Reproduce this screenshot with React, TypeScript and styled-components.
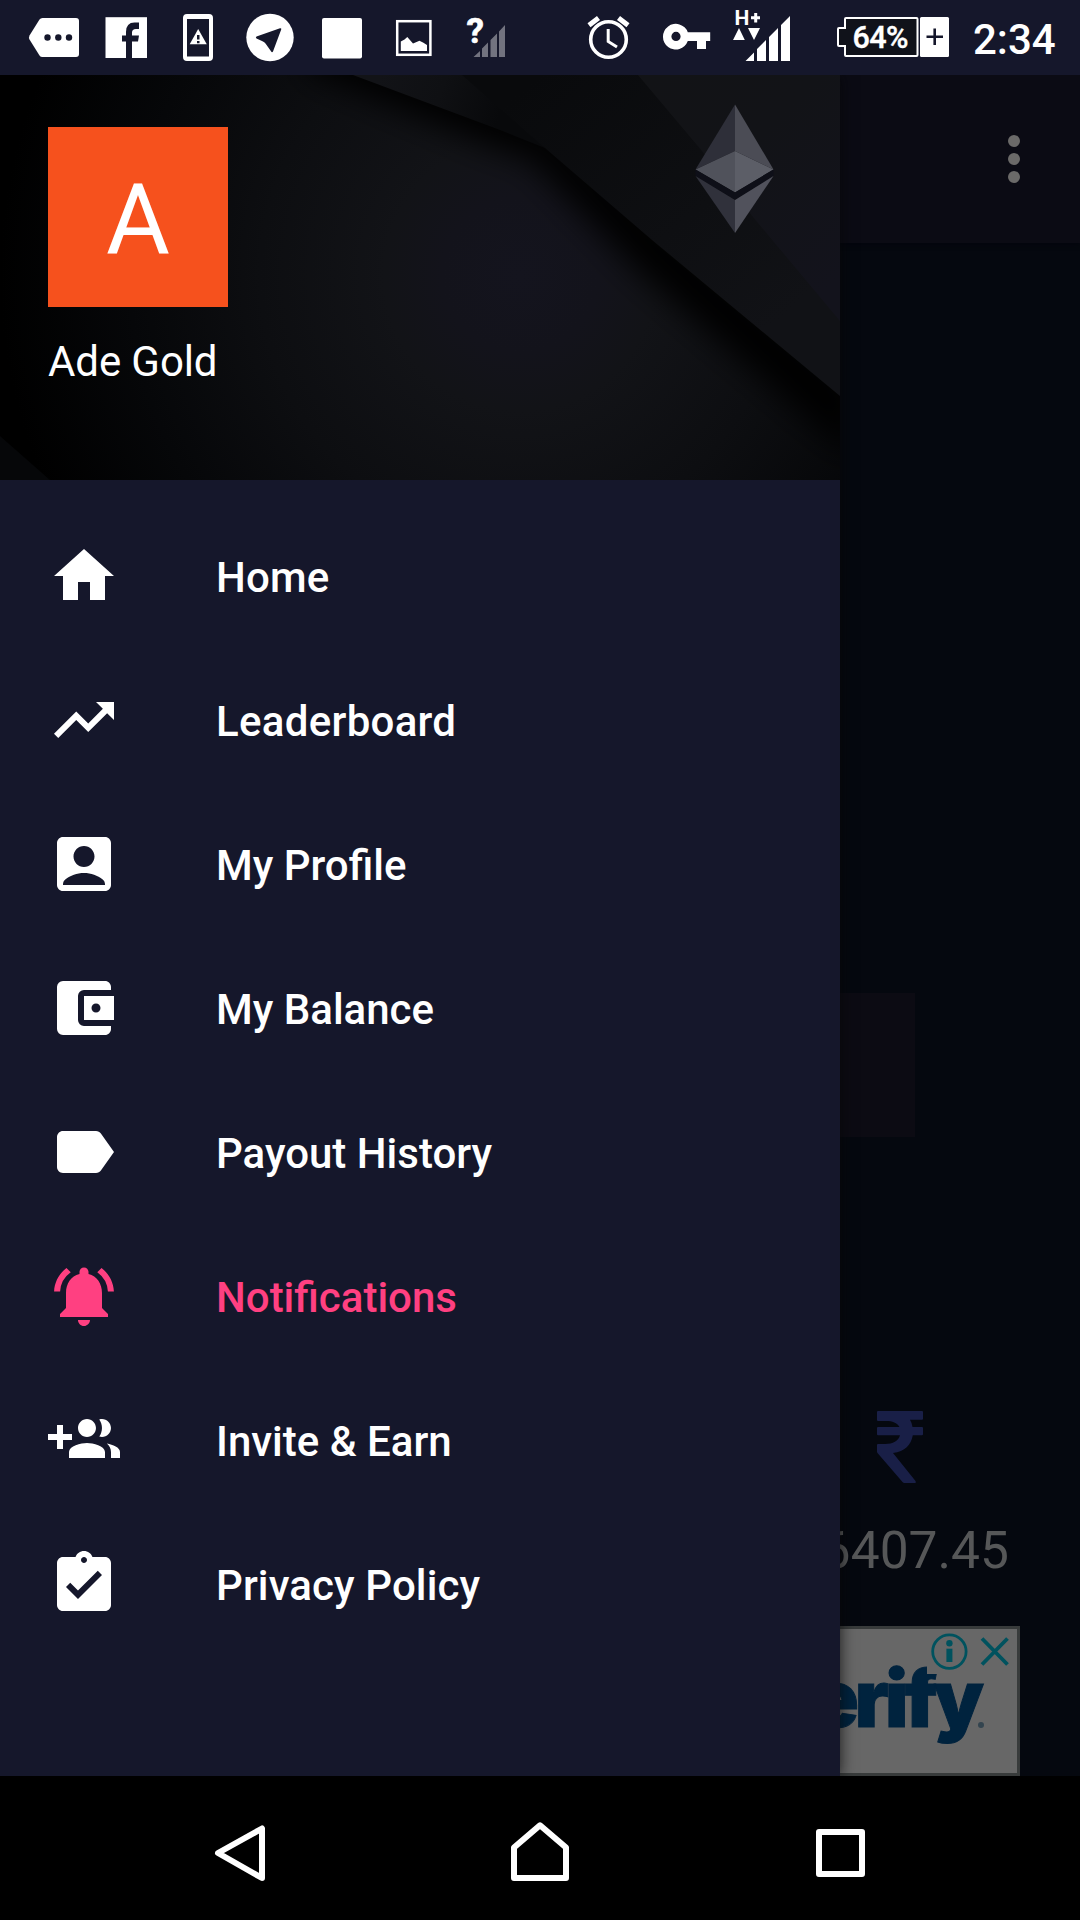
import React from "react";
import styled, { createGlobalStyle } from "styled-components";
import {
  MdHome,
  MdTrendingUp,
  MdAccountBox,
  MdAccountBalanceWallet,
  MdLabel,
  MdNotificationsActive,
  MdAssignmentTurnedIn,
} from "react-icons/md";

const NAVY = "#15172b";

const GlobalStyle = createGlobalStyle`
  * { box-sizing: border-box; }
  body { margin: 0; background: #000; }
`;

const Screen = styled.div`
  width: 1080px;
  height: 1920px;
  display: flex;
  flex-direction: column;
  overflow: hidden;
  background: #05080f;
  color: #fff;
  font-family: Roboto, "Noto Sans", sans-serif;
`;

/* ---------- status bar ---------- */

const StatusBar = styled.header`
  height: 75px;
  flex: none;
  display: flex;
  align-items: stretch;
  background: ${NAVY};
  padding: 0 25px 0 28px;
`;

const StatusGroup = styled.div<{ $end?: boolean }>`
  display: flex;
  ${(p) => p.$end && "margin-left: auto;"}
`;

const Glyph = styled.svg<{ $before?: number }>`
  display: block;
  flex: none;
  height: 75px;
  margin-left: ${(p) => p.$before ?? 0}px;
  fill: #fff;
  font-family: Roboto, sans-serif;
`;

const Clock = styled.span`
  width: 82px;
  margin-left: 23px;
  font-size: 42px;
  font-weight: 500;
  line-height: 79px;
  white-space: nowrap;
`;

/* Each status glyph is drawn in bar coordinates; `x` is where its box starts. */
const StatusGlyph = ({
  x,
  w,
  before,
  children,
}: {
  x: number;
  w: number;
  before?: number;
  children: React.ReactNode;
}) => (
  <Glyph $before={before} width={w} height={75} viewBox={`${x} 0 ${w} 75`}>
    {children}
  </Glyph>
);

/* ---------- stage ---------- */

const Stage = styled.main`
  position: relative;
  height: 1701px;
  flex: none;
  overflow: hidden;
`;

const Page = styled.section`
  height: 100%;
  display: flex;
  flex-direction: column;
  background: #05080f;
`;

const Toolbar = styled.div`
  height: 168px;
  flex: none;
  display: flex;
  align-items: center;
  justify-content: flex-end;
  padding-right: 60px;
  background: #0b0b14;
  box-shadow: 0 2px 5px rgba(2, 2, 10, 0.45);
`;

const Overflow = styled.div`
  display: flex;
  flex-direction: column;
  gap: 6px;
`;

const Dot = styled.i`
  width: 12px;
  height: 12px;
  border-radius: 50%;
  background: #6b6a69;
`;

const Card = styled.div`
  width: 750px;
  height: 144px;
  margin: 750px auto 0;
  flex: none;
  background: #0c0b13;
`;

const Rates = styled.div`
  display: grid;
  grid-template-columns: repeat(3, 360px);
  margin-top: 274px;
`;

const Rate = styled.div`
  grid-column: 3;
  display: flex;
  flex-direction: column;
  align-items: center;
`;

const RupeeIcon = styled.svg`
  width: 46px;
  height: 72px;
  fill: #191f47;
`;

const Amount = styled.div`
  align-self: flex-end;
  margin: 36px 71px 0 0;
  font-size: 51.5px;
  line-height: 64px;
  color: #565758;
`;

const Ad = styled.div`
  width: 960px;
  height: 150px;
  margin: auto auto 0;
  flex: none;
  display: flex;
  justify-content: flex-end;
  position: relative;
  border: 3px solid #383b3b;
  background: #676767;
  overflow: hidden;
`;

const AdBrand = styled.span`
  margin: 21px 37px 0 0;
  font-family: Inter, "Liberation Sans", sans-serif;
  font-size: 79px;
  font-weight: 900;
  line-height: 97px;
  letter-spacing: -4px;
  color: #00233e;
  -webkit-text-stroke: 1px #00233e;
`;

const AdChoices = styled.div`
  position: absolute;
  top: 0;
  right: 0;
  width: 90px;
  height: 45px;
  background: #676767;
`;

const RegisteredDot = styled.i`
  position: absolute;
  right: 33px;
  bottom: 45px;
  width: 6px;
  height: 6px;
  border-radius: 50%;
  background: #33444f;
`;

/* ---------- drawer ---------- */

const Drawer = styled.aside`
  position: absolute;
  inset: 0 auto 0 0;
  width: 840px;
  display: flex;
  flex-direction: column;
  background: ${NAVY};
  box-shadow: 0 0 14px rgba(6, 6, 6, 0.8);
`;

const Account = styled.div`
  position: relative;
  height: 405px;
  flex: none;
  padding: 52px 48px 0;
  overflow: hidden;
`;

const Backdrop = styled.svg`
  position: absolute;
  inset: 0;
`;

const Avatar = styled.div`
  position: relative;
  width: 180px;
  height: 180px;
  display: flex;
  align-items: center;
  justify-content: center;
  background: #f6511d;
  font-size: 98px;
  line-height: 1;
  padding-top: 6px;
`;

const UserName = styled.div`
  position: relative;
  margin-top: 30px;
  font-size: 42px;
  line-height: 50px;
  letter-spacing: -0.1px;
`;

const Menu = styled.nav`
  display: flex;
  flex-direction: column;
  padding-top: 24px;
`;

const MenuItem = styled.a<{ $active?: boolean }>`
  height: 144px;
  display: flex;
  align-items: center;
  gap: 96px;
  padding-left: 48px;
  font-size: 42px;
  font-weight: 500;
  color: ${(p) => (p.$active ? "#ff4081" : "#fff")};

  svg {
    width: 72px;
    height: 72px;
    flex: none;
  }
`;

const MenuLabel = styled.span<{ $tracking?: number }>`
  padding-top: 2px;
  letter-spacing: ${(p) => p.$tracking ?? 0}px;
  font-variant-ligatures: common-ligatures;
`;

/* ---------- navigation bar ---------- */

const NavBar = styled.footer`
  height: 144px;
  flex: none;
  display: flex;
  align-items: center;
  justify-content: space-between;
  padding: 10px 204px 0 204px;
  background: #000;
`;

const NavIcon = styled.svg`
  width: 72px;
  height: 72px;
  fill: none;
  stroke: #fff;
  stroke-width: 6px;
  stroke-linejoin: round;
`;

/* Two people with the plus sign on the left. */
const GroupAddIcon = () => (
  <svg viewBox="0 0 24 24" fill="currentColor">
    <path d="M8 10H5V7H3v3H0v2h3v3h2v-3h3v-2zm10 1c1.660 0 2.990-1.340 2.990-3S19.660 5 18 5c-.320 0-.630.050-.910.140.570.810.900 1.790.900 2.860s-.340 2.040-.900 2.860c.280.090.590.140.910.140zm-5 0c1.660 0 2.990-1.340 2.990-3S14.660 5 13 5c-1.660 0-3 1.340-3 3s1.340 3 3 3zm6.620 2.160c.830.730 1.380 1.660 1.380 2.840v2h3v-2c0-1.540-2.370-2.490-4.380-2.840zM13 13c-2 0-6 1-6 3v2h12v-2c0-2-4-3-6-3z" />
  </svg>
);

const menu = [
  { label: "Home", Icon: MdHome, tracking: 0.2 },
  { label: "Leaderboard", Icon: MdTrendingUp, tracking: 0.3 },
  { label: "My Profile", Icon: MdAccountBox },
  { label: "My Balance", Icon: MdAccountBalanceWallet },
  { label: "Payout History", Icon: MdLabel },
  { label: "Notifications", Icon: MdNotificationsActive, active: true },
  { label: "Invite & Earn", Icon: GroupAddIcon },
  { label: "Privacy Policy", Icon: MdAssignmentTurnedIn, tracking: 0.1 },
];

const HeaderArt = () => (
  <Backdrop width="840" height="405" viewBox="0 0 840 405">
    <defs>
      <radialGradient id="glow" gradientUnits="userSpaceOnUse" cx="520" cy="200" r="520">
        <stop offset="0" stopColor="#14141e" />
        <stop offset="0.15" stopColor="#13131b" />
        <stop offset="0.26" stopColor="#121317" />
        <stop offset="0.5" stopColor="#0d0e11" />
        <stop offset="0.75" stopColor="#060709" />
        <stop offset="1" stopColor="#000" />
      </radialGradient>
      <linearGradient id="band" gradientUnits="userSpaceOnUse" x1="540" y1="0" x2="760" y2="260">
        <stop offset="0" stopColor="#090a0c" />
        <stop offset="0.6" stopColor="#0e0f12" />
        <stop offset="1" stopColor="#111216" />
      </linearGradient>
      <linearGradient id="corner" gradientUnits="userSpaceOnUse" x1="640" y1="0" x2="840" y2="200">
        <stop offset="0" stopColor="#121316" />
        <stop offset="0.45" stopColor="#121317" />
        <stop offset="1" stopColor="#13131c" />
      </linearGradient>
      <linearGradient id="sliver" gradientUnits="userSpaceOnUse" x1="380" y1="0" x2="500" y2="40">
        <stop offset="0" stopColor="#121317" />
        <stop offset="0.5" stopColor="#0f1013" />
        <stop offset="1" stopColor="#08090b" />
      </linearGradient>
      <filter id="soft" x="-30%" y="-30%" width="160%" height="160%">
        <feGaussianBlur stdDeviation="16" />
      </filter>
    </defs>
    <rect width="840" height="405" fill="url(#glow)" />
    <path d="M310 -20L500 58L538 70L650 185L840 350V320L652 155L538 57L462 -30Z" fill="#000" stroke="#000" strokeWidth="30" filter="url(#soft)" />
    <path d="M353 0L500 55L545 73L470 0Z" fill="url(#sliver)" />
    <path d="M462 0L538 67L652 165L840 321V0Z" fill="url(#band)" />
    <path d="M638 0L702 76L753 142L840 246V0Z" fill="url(#corner)" />
    <path d="M0 361L50 405H0Z" fill="#060709" />
    <path d="M735 29.500L695.500 94.500L735 76Z" fill="#2e2f39" />
    <path d="M735 29.500L773.500 94.500L735 76Z" fill="#4b4c55" />
    <path d="M735 76L695.500 94.500L735 117.500Z" fill="#50525b" />
    <path d="M735 76L773.500 94.500L735 117.500Z" fill="#5c5e67" />
    <path d="M695.500 94.500L735 117.500L773.500 94.500V101L735 125L695.500 101Z" fill="#0e0f18" />
    <path d="M695.500 101L735 125V158Z" fill="#30313b" />
    <path d="M773.500 101L735 125V158Z" fill="#51525c" />
  </Backdrop>
);

export default function App() {
  return (
    <Screen>
      <GlobalStyle />
      <StatusBar>
        <StatusGroup>
          <StatusGlyph x={28} w={52}>
            <path d="M42.500 18H76Q79 18 79 21V54Q79 57 76 57H42.500Q40.500 57 39.500 55.500L29.500 39.500Q28.500 37.500 29.500 35.500L39.500 19.500Q40.500 18 42.500 18Z" />
            <g fill={NAVY}>
              <circle cx="47.500" cy="37.500" r="3.200" />
              <circle cx="58.300" cy="37.500" r="3.200" />
              <circle cx="69" cy="37.500" r="3.200" />
            </g>
          </StatusGlyph>
          <StatusGlyph x={104} w={44} before={24}>
            <rect x="105.500" y="17.200" width="41.500" height="40.800" />
            <path fill={NAVY} d="M126 58V41.500H122V35.500H126V32Q126 22.500 134.500 22.500H139V29H136Q132 29 132 32.500V35.500H139L138 41.500H132V58Z" />
          </StatusGlyph>
          <StatusGlyph x={182} w={32} before={34}>
            <path fillRule="evenodd" d="M187 14H209Q213 14 213 18V57Q213 61 209 61H187Q183 61 183 57V18Q183 14 187 14ZM187 19V56.500H209V19Z" />
            <path d="M198.200 29L206.800 44.300H189.700Z" />
            <path fill={NAVY} d="M197 35h2.500v4.500h-2.500zM197 41h2.500v2.300h-2.500z" />
          </StatusGlyph>
          <StatusGlyph x={246} w={48} before={32}>
            <circle cx="270" cy="37.500" r="23.700" />
            <path fill={NAVY} d="M256.500 36.500L280 28.200Q281.700 28 281.200 29.600L273 51.500Q272 53 271 51.300L265.500 43.500Q264.500 42 262.500 41.200L256.500 38.500Q255.200 37.500 256.500 36.500Z" />
          </StatusGlyph>
          <StatusGlyph x={321} w={42} before={27}>
            <rect x="322" y="18" width="40" height="40.500" rx="2" />
          </StatusGlyph>
          <StatusGlyph x={395} w={38} before={32}>
            <rect x="397.200" y="21.200" width="33.200" height="33.600" fill="none" stroke="#fff" strokeWidth="2.500" />
            <path d="M400.800 51V41.500L404.500 39.500L407.300 37L413 43.500L419.500 40.800L423 42.500L427 45V51Z" />
          </StatusGlyph>
          <StatusGlyph x={466} w={41} before={33}>
            <path fill="#72737f" d="M473.500 57L480 51V57ZM482 57V48.500L488 42.500V57ZM490.500 57V40L497 33.500V57ZM499 57V31.500L505 25V57Z" />
            <text x="466.500" y="43" fontSize="35" fontWeight="700" stroke="#fff" strokeWidth="0.600">?</text>
          </StatusGlyph>
        </StatusGroup>
        <StatusGroup $end>
          <StatusGlyph x={586} w={45}>
            <circle cx="608.500" cy="39.500" r="17.800" fill="none" stroke="#fff" strokeWidth="3.600" />
            <path d="M608.200 29V41.500L617 47" fill="none" stroke="#fff" strokeWidth="3" />
            <path d="M589 25.300L598.500 18M618.500 18L628 25.300" stroke="#fff" strokeWidth="5" />
          </StatusGlyph>
          <StatusGlyph x={662} w={49} before={31}>
            <path fillRule="evenodd" d="M687.800 32.300H710.200V41H706V49H697V41H687.800A12.800 12.800 0 1 1 687.800 32.300ZM676 31.800A4.600 4.600 0 1 0 676 41A4.600 4.600 0 1 0 676 31.800Z" />
          </StatusGlyph>
          <StatusGlyph x={732} w={60} before={21}>
            <text x="734.500" y="25" fontSize="21" fontWeight="700">H</text>
            <path d="M751 16.300H754.200V13H757.200V16.300H760V19.300H757.200V22.500H754.200V19.300H751Z" />
            <path d="M739 28L744.800 40H733ZM748 28H760L754 40Z" />
            <path d="M745.500 61L754 52.500V61ZM757 61V49L766 40V61ZM769 61V37L778 28V61ZM781 61V25L790 16V61Z" />
          </StatusGlyph>
          <StatusGlyph x={836} w={114} before={44}>
            <path d="M846 18H916.500Q917.500 18 917.500 19V55Q917.500 56 916.500 56H846Q845 56 845 55V46H839Q838 46 838 45V29Q838 28 839 28H845V19Q845 18 846 18Z" fill="#10121a" stroke="#fff" strokeWidth="2" />
            <rect x="920" y="17" width="29" height="40" rx="1.500" />
            <path d="M926.500 36.700H943M934.700 28.500V45" stroke={NAVY} strokeWidth="2.600" />
            <text x="852.500" y="47.700" fontSize="30.500" fontWeight="500" textLength="56" stroke="#fff" strokeWidth="0.400">64%</text>
          </StatusGlyph>
          <Clock>2:34</Clock>
        </StatusGroup>
      </StatusBar>

      <Stage>
        <Page>
          <Toolbar>
            <Overflow>
              <Dot />
              <Dot />
              <Dot />
            </Overflow>
          </Toolbar>
          <Card />
          <Rates>
            <Rate>
              <RupeeIcon viewBox="0 0 46 72" preserveAspectRatio="none">
                <path d="M1 0H45Q46 0 46 1V7.500Q46 8.700 45 8.700H33Q34.800 11.500 35.500 16H45Q46 16 46 17V23.300Q46 24.300 45 24.300H35.800C34 34 28 40.500 16 42L38.500 70Q39.500 72 37.500 72H27.500Q26.300 72 25.500 71L0.500 42Q0 41.300 0 40.500V34Q0 33 1 33H8C16 33 21.500 30 23 24.300H1Q0 24.300 0 23.300V17Q0 16 1 16H22.500C20 11.800 15.500 10 9 10H1Q0 10 0 9V1Q0 0 1 0Z" />
              </RupeeIcon>
              <Amount>6407.45</Amount>
            </Rate>
          </Rates>
          <Ad>
            <AdBrand>erify</AdBrand>
            <RegisteredDot />
            <AdChoices>
              <svg width="90" height="45" viewBox="927 1629 90 45" fill="none" stroke="#00525e">
                <circle cx="949.400" cy="1651.600" r="16.700" strokeWidth="2.800" />
                <circle cx="949.400" cy="1643.200" r="3.200" fill="#00525e" stroke="none" />
                <path d="M949.400 1648.700V1662" strokeWidth="6" />
                <path d="M982 1638.500L1007.500 1664.500M1007.500 1638.500L982 1664.500" strokeWidth="3.800" />
              </svg>
            </AdChoices>
          </Ad>
        </Page>

        <Drawer>
          <Account>
            <HeaderArt />
            <Avatar>A</Avatar>
            <UserName>Ade Gold</UserName>
          </Account>
          <Menu>
            {menu.map(({ label, Icon, active, tracking }) => (
              <MenuItem key={label} $active={active}>
                <Icon />
                <MenuLabel $tracking={tracking}>{label}</MenuLabel>
              </MenuItem>
            ))}
          </Menu>
        </Drawer>
      </Stage>

      <NavBar>
        <NavIcon viewBox="204 1817 72 72">
          <path d="M262 1828.500V1878L218 1853Z" />
        </NavIcon>
        <NavIcon viewBox="504 1817 72 72">
          <path d="M514 1878V1847.500L540 1825.300L566 1847.500V1878Z" />
        </NavIcon>
        <NavIcon viewBox="804 1817 72 72">
          <path d="M819 1832H862V1874H819Z" />
        </NavIcon>
      </NavBar>
    </Screen>
  );
}
